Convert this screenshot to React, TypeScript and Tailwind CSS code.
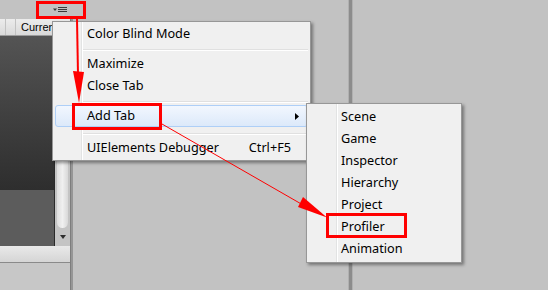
import { Fragment } from "react";

type MenuEntry =
  | { label: string; shortcut?: string; sub?: boolean; active?: boolean }
  | "sep"
  | "sepWide";

const mainItems: MenuEntry[] = [
  { label: "Color Blind Mode" },
  "sep",
  { label: "Maximize" },
  { label: "Close Tab" },
  "sep",
  { label: "Add Tab", sub: true, active: true },
  "sepWide",
  { label: "UIElements Debugger", shortcut: "Ctrl+F5" },
];

const tabItems = ["Scene", "Game", "Inspector", "Hierarchy", "Project", "Profiler", "Animation"];

const MenuRow = ({ item }: { item: Exclude<MenuEntry, "sep" | "sepWide"> }) => (
  <div
    className={`relative mx-[2px] flex h-[22px] items-center rounded-[3px] border pl-[31px] ${
      item.active
        ? "border-[#aecff7] bg-linear-to-b from-[#f2f7fe] to-[#dce9fa]"
        : "border-transparent"
    }`}
  >
    <span>{item.label}</span>
    {item.shortcut && <span className="ml-auto pr-[16px]">{item.shortcut}</span>}
    {item.sub && (
      <svg className="ml-auto mr-[8px]" width="4" height="7" viewBox="0 0 4 7">
        <path d="M0 0 L4 3.5 L0 7 Z" fill="#000" />
      </svg>
    )}
  </div>
);

const Separator = ({ wide }: { wide?: boolean }) => (
  <div className={`relative pl-[30px] pr-[2px] ${wide ? "h-[10px] pt-[6px]" : "h-[8px] pt-[4px]"}`}>
    <div className="h-[1px] bg-[#e0e0e0]" />
    <div className="h-[1px] bg-white" />
  </div>
);

const MainMenu = () => (
  <div className="absolute left-[52px] top-[21px] w-[259px] border border-[#979797] bg-[#f0f0f0] pb-[1px] pt-[1px] text-[12.7px] text-black shadow-[2px_2px_3px_rgba(0,0,0,0.4)] font-['Noto_Sans',sans-serif]">
    {/* icon gutter */}
    <div className="absolute bottom-0 left-[28px] top-0 w-[1px] bg-[#e2e3e3]" />
    <div className="absolute bottom-0 left-[29px] top-0 w-[1px] bg-white" />
    {mainItems.map((item, i) => (
      <Fragment key={i}>
        {item === "sep" ? <Separator /> : item === "sepWide" ? <Separator wide /> : <MenuRow item={item} />}
      </Fragment>
    ))}
  </div>
);

const TabMenu = () => (
  <div className="absolute left-[306px] top-[103px] w-[156px] border border-[#979797] bg-[#f0f0f0] py-[2px] text-[12.7px] text-black shadow-[2px_2px_3px_rgba(0,0,0,0.4)] font-['Noto_Sans',sans-serif]">
    <div className="absolute bottom-0 left-[29px] top-0 w-[1px] bg-[#e2e3e3]" />
    <div className="absolute bottom-0 left-[30px] top-0 w-[1px] bg-white" />
    {tabItems.map((t) => (
      <div key={t} className="relative mx-[2px] flex h-[22px] items-center pl-[32px]">
        {t}
      </div>
    ))}
  </div>
);

const Annotations = () => (
  <svg className="pointer-events-none absolute left-0 top-0 z-20" width="548" height="290" viewBox="0 0 548 290">
    <rect x="37.5" y="2.5" width="47" height="15" fill="none" stroke="#ff0000" strokeWidth="3" />
    <rect x="73.5" y="104.5" width="87" height="24" fill="none" stroke="#ff0000" strokeWidth="3" />
    <rect x="327.5" y="214.5" width="78" height="22" fill="none" stroke="#ff0000" strokeWidth="3" />
    <line x1="77" y1="19" x2="78" y2="75" stroke="#ff0000" strokeWidth="2" />
    <polygon points="73,71 84,72 79,103" fill="#ff0000" />
    <line x1="162" y1="124" x2="310" y2="209" stroke="#ff0000" strokeWidth="1" />
    <polygon points="327,217.5 298,207 303,197" fill="#ff0000" />
  </svg>
);

const App = () => {
  return (
    <div className="relative flex h-[290px] w-[548px] overflow-hidden bg-[#c2c2c2]">
      {/* left dock panel */}
      <div className="flex h-full w-[70px] flex-col">
        <div className="flex h-[19px] items-center justify-end pr-[3px]">
          <svg width="14" height="6" viewBox="0 0 14 6">
            <path d="M0 1.5 L4 1.5 L2 4 Z" fill="#3a3a3a" />
            <rect x="5" y="0" width="9" height="1" fill="#3a3a3a" />
            <rect x="5" y="2" width="9" height="1" fill="#3a3a3a" />
            <rect x="5" y="4" width="9" height="1" fill="#3a3a3a" />
          </svg>
        </div>
        <div className="flex h-[17px] items-center border-b border-[#9b9b9b] bg-linear-to-b from-[#ececec] to-[#d9d9d9]">
          <div className="h-full w-[6px] border-r border-[#c2c2c2]" />
          <div className="h-full w-[10px] border-r border-[#c2c2c2]" />
          <span className="whitespace-nowrap pl-[5px] text-[11px] text-black font-['Liberation_Sans',sans-serif]">Current</span>
        </div>
        <div className="flex flex-1">
          <div className="flex w-[55px] flex-col border-r border-[#2a2a2a]">
            <div className="flex-1 bg-linear-to-b from-[#545454] to-[#2e2e2e]" />
            <div className="h-[56px] bg-[#5c5c5c]" />
          </div>
          <div className="flex w-[15px] flex-col bg-[#c4c4c4]">
            <div className="mx-[2px] flex-1 rounded-b-[6px] bg-linear-to-r from-[#dedede] via-[#f0f0f0] to-[#d8d8d8]" />
            <div className="flex h-[18px] items-center justify-center">
              <svg width="6" height="4" viewBox="0 0 6 4">
                <path d="M0 0 L6 0 L3 4 Z" fill="#2e2e2e" />
              </svg>
            </div>
          </div>
        </div>
        <div className="h-[17px] border-b border-[#8a8a8a] bg-linear-to-b from-[#e9e9e9] to-[#d5d5d5]" />
        <div className="h-[27px] bg-[#c7c7c7]" />
      </div>

      <div className="flex w-[3px] flex-col">
        <div className="h-[19px]" />
        <div className="flex-1 border-l border-[#7e7e7e] bg-[#969696]" />
      </div>

      {/* middle area */}
      <div className="w-[275px]" />

      <div className="w-[5px] border-x border-[#b0b0b0] bg-[#8c8c8c]" />

      {/* right area */}
      <div className="flex-1" />

      <MainMenu />
      <TabMenu />
      <Annotations />
    </div>
  );
};

export default App;
